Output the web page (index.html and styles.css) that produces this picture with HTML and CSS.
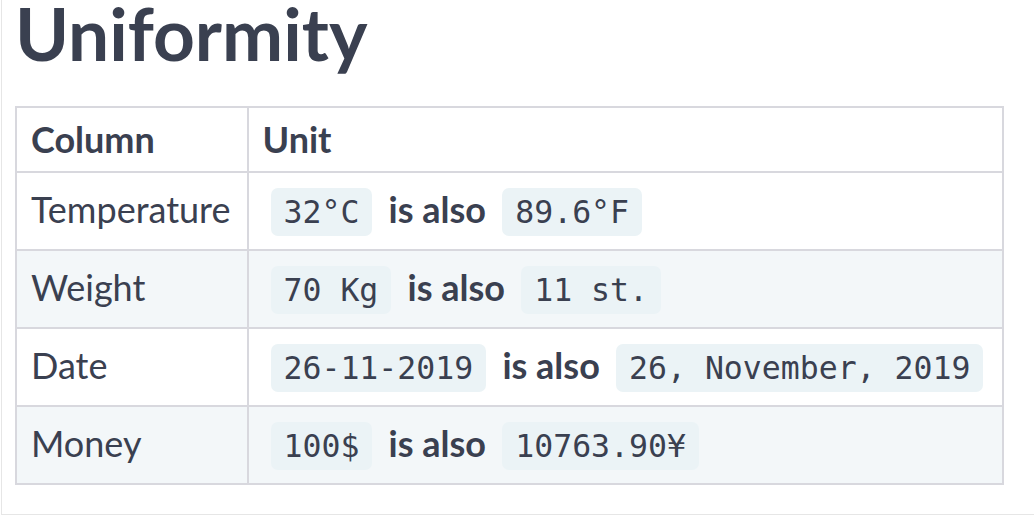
FILE: index.html
```html
<!DOCTYPE html>
<html>
<head>
<meta charset="utf-8">
<link rel="stylesheet" href="styles.css">
</head>
<body>
<div class="slide">
  <h1 class="title">Uniformity</h1>
  <table class="units">
    <thead>
      <tr><th>Column</th><th>Unit</th></tr>
    </thead>
    <tbody>
      <tr><td>Temperature</td><td><code>32°C</code> <strong>is also</strong> <code>89.6°F</code></td></tr>
      <tr><td>Weight</td><td><code>70 Kg</code> <strong>is also</strong> <code>11 st.</code></td></tr>
      <tr><td>Date</td><td><code>26-11-2019</code> <strong>is also</strong> <code>26, November, 2019</code></td></tr>
      <tr><td>Money</td><td><code>100$</code> <strong>is also</strong> <code>10763.90¥</code></td></tr>
    </tbody>
  </table>
</div>
</body>
</html>
```

FILE: styles.css
```css
html, body {
  margin: 0;
  padding: 0;
  background: #ffffff;
}
.slide {
  margin-left: 1px;
  height: 515px;
  box-sizing: border-box;
  border-left: 1px solid #e6e6e6;
  border-bottom: 1px solid #e6e6e6;
  padding-left: 13px;
  font-family: Lato, "Noto Sans", sans-serif;
  color: #3a4050;
  overflow: hidden;
}
.title {
  margin: -3px 0 0 0;
  padding-left: 0;
  font-size: 73px;
  line-height: 72px;
  font-weight: 700;
  color: #3a4050;
}
.units {
  margin-top: 37px;
  border-collapse: collapse;
  font-size: 36px;
  line-height: 44px;
  white-space: nowrap;
}
.units th, .units td {
  border: 2px solid #d8d8de;
  padding: 9px 12px 10px 14px;
  text-align: left;
}
.units th:first-child, .units td:first-child {
  padding-right: 16px;
}
.units th {
  font-weight: 700;
}
.units tbody tr:nth-child(odd) {
  background: #ffffff;
}
.units tbody tr:nth-child(even) {
  background: #f3f7f9;
}
.units td {
  padding-top: 14px;
  padding-bottom: 18px;
}
.units code {
  font-family: "DejaVu Sans Mono", "Liberation Mono", monospace;
  font-size: 31.5px;
  line-height: 1;
  background: #ebf3f6;
  border-radius: 7px;
  padding: 6px 13px;
  margin: 0 7px;
  color: #3a4050;
}
.units td code:first-child {
  margin-left: 8px;
}
.units strong {
  font-weight: 700;
}
```
